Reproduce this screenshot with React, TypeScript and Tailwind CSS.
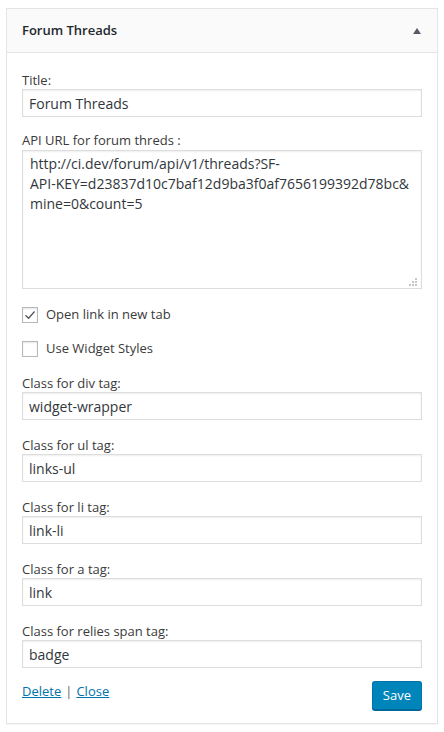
const font = { fontFamily: '"Open Sans", "Liberation Sans", sans-serif' };

function Field({ label, value }: { label: string; value: string }) {
  return (
    <div className="mt-[16px]">
      <label className="block text-[13px] leading-[18px] text-[#3a3a3a]">{label}</label>
      <input
        readOnly
        value={value}
        className="block w-full h-[28px] border border-[#ddd] bg-white px-[6px] text-[14px] text-[#32373c] shadow-[inset_0_1px_2px_rgba(0,0,0,0.07)] outline-none"
        style={font}
      />
    </div>
  );
}

function Check({ checked, label }: { checked: boolean; label: string }) {
  return (
    <div className="flex items-center h-[18px]">
      <span className="flex items-center justify-center w-[16px] h-[16px] border border-[#b4b9be] bg-white shadow-[inset_0_1px_2px_rgba(0,0,0,0.1)]">
        {checked && (
          <svg width="12" height="12" viewBox="0 0 12 12">
            <path d="M1.5 6.2 L4.6 9.2 L10.5 2.5" fill="none" stroke="#555" strokeWidth="1.3" />
          </svg>
        )}
      </span>
      <span className="ml-[8px] text-[13px] text-[#3a3a3a]">{label}</span>
    </div>
  );
}

export default function App() {
  return (
    <div className="bg-white w-[444px] h-[732px] pt-[8px] pl-[6px]" style={font}>
      <div className="w-[432px] border border-[#e5e5e5] bg-white shadow-[0_1px_1px_rgba(0,0,0,0.04)]">
        <div className="h-[44px] flex items-center justify-between px-[15px] bg-[#fafafa] border-b border-[#e5e5e5]">
          <h3 className="text-[13px] font-semibold text-[#23282d]">Forum Threads</h3>
          <svg width="8" height="6" viewBox="0 0 8 6" className="mr-[1px]">
            <path d="M4 0 L8 6 L0 6 Z" fill="#555d66" />
          </svg>
        </div>

        <div className="px-[15px] pt-[18px] pb-[13px]">
          <label className="block text-[13px] leading-[18px] text-[#3a3a3a]">Title:</label>
          <input
            readOnly
            value="Forum Threads"
            className="block w-full h-[28px] border border-[#ddd] bg-white px-[6px] text-[14px] text-[#32373c] shadow-[inset_0_1px_2px_rgba(0,0,0,0.07)] outline-none"
            style={font}
          />

          <label className="block mt-[14px] text-[13px] leading-[18px] text-[#3a3a3a]">API URL for forum threds :</label>
          <div className="relative mt-[1px]">
            <textarea
              readOnly
              defaultValue={'http://ci.dev/forum/api/v1/threads?SF-\nAPI-KEY=d23837d10c7baf12d9ba3f0af7656199392d78bc&\nmine=0&count=5'}
              className="block w-full h-[139px] resize-none border border-[#ddd] bg-white px-[7px] pt-[3px] text-[14px] leading-[20px] text-[#32373c] shadow-[inset_0_1px_2px_rgba(0,0,0,0.07)] outline-none whitespace-pre"
              style={font}
            />
            {/* resize grip */}
            <svg width="8" height="8" viewBox="0 0 8 8" className="absolute right-[5px] bottom-[3px]">
              <rect x="6" y="0" width="2" height="2" fill="#c8c8c8" />
              <rect x="3" y="3" width="2" height="2" fill="#c8c8c8" />
              <rect x="6" y="3" width="2" height="2" fill="#c8c8c8" />
              <rect x="0" y="6" width="2" height="2" fill="#c8c8c8" />
              <rect x="3" y="6" width="2" height="2" fill="#c8c8c8" />
              <rect x="6" y="6" width="2" height="2" fill="#c8c8c8" />
            </svg>
          </div>

          <div className="mt-[17px]">
            <Check checked label="Open link in new tab" />
          </div>
          <div className="mt-[16px] mb-[1px]">
            <Check checked={false} label="Use Widget Styles" />
          </div>

          <Field label="Class for div tag:" value="widget-wrapper" />
          <Field label="Class for ul tag:" value="links-ul" />
          <Field label="Class for li tag:" value="link-li" />
          <Field label="Class for a tag:" value="link" />
          <Field label="Class for relies span tag:" value="badge" />

          <div className="mt-[13px] flex items-start justify-between">
            <div className="pt-[1px] text-[13px] leading-[18px]">
              <a href="#" className="text-[#0073aa] underline">Delete</a>
              <span className="text-[#666] mx-[4px]">|</span>
              <a href="#" className="text-[#0073aa] underline">Close</a>
            </div>
            <button
              className="h-[29px] px-[10px] rounded-[3px] bg-[#0085ba] border border-[#0073aa] border-b-[#006799] text-white text-[13px] shadow-[0_1px_0_#006799]"
              style={font}
            >
              Save
            </button>
          </div>
        </div>
      </div>
    </div>
  );
}
